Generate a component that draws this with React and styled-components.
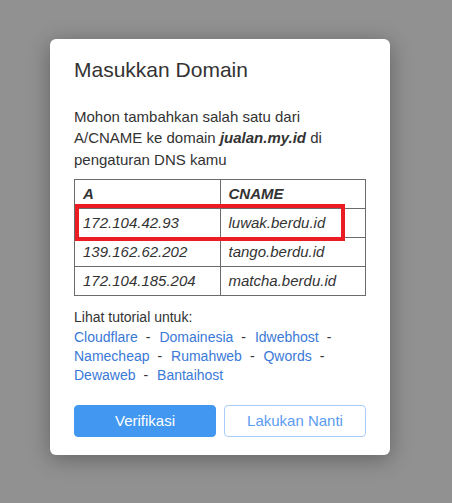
import React from "react";
import styled, { createGlobalStyle } from "styled-components";

const Global = createGlobalStyle`
  html, body { margin: 0; padding: 0; }
  body {
    background: #919191;
    font-family: "Liberation Sans", Arial, sans-serif;
    color: #333;
  }
`;

const Backdrop = styled.div`
  width: 452px;
  height: 503px;
  box-sizing: border-box;
  padding-top: 39px;
  padding-left: 50px;
`;

const Modal = styled.div`
  width: 340px;
  box-sizing: border-box;
  background: #fff;
  border-radius: 6px;
  box-shadow: 0 4px 22px rgba(0, 0, 0, 0.32);
  padding: 19px 24px 18px;
  display: flex;
  flex-direction: column;
`;

const Title = styled.h4`
  margin: 0 0 24px;
  font-size: 21px;
  font-weight: 400;
  line-height: 24px;
  color: #333;
`;

const Intro = styled.p`
  margin: 0 0 9px;
  font-size: 15px;
  line-height: 21.4px;
  color: #333;
`;

const Domain = styled.b`
  font-style: italic;
  font-weight: 700;
`;

const TableWrap = styled.div`
  position: relative;
`;

const Table = styled.table`
  width: 100%;
  border-collapse: collapse;
  font-size: 15px;
  font-style: italic;
  color: #333;
`;

const Cell = styled.td`
  border: 1px solid #6b6b6b;
  padding: 4px 8px;
  line-height: 20px;
  width: 50%;
  font-weight: ${(p) => (p.$head ? 700 : 400)};
`;

const Highlight = styled.div`
  position: absolute;
  left: 1px;
  top: 25px;
  width: 270px;
  height: 37px;
  box-sizing: border-box;
  border: 4px solid #ec1c24;
  pointer-events: none;
`;

const Tutorial = styled.div`
  margin-top: 12px;
  font-size: 14px;
  line-height: 19.4px;
  color: #333;
`;

const Link = styled.a`
  color: #3a79d6;
  text-decoration: none;
`;

const Sep = styled.span`
  margin-left: 8px;
  margin-right: 5px;
  color: #333;
`;

const Actions = styled.div`
  display: flex;
  gap: 8px;
  margin-top: 19px;
`;

const Button = styled.button`
  flex: 1;
  height: 32px;
  border-radius: 4px;
  font-family: "Liberation Sans", Arial, sans-serif;
  font-size: 15px;
  cursor: pointer;
  border: 1px solid ${(p) => (p.$primary ? "#4298f0" : "#a9cdf6")};
  background: ${(p) => (p.$primary ? "#4298f0" : "#fff")};
  color: ${(p) => (p.$primary ? "#fff" : "#5b9cf0")};
`;

const rows = [
  ["172.104.42.93", "luwak.berdu.id"],
  ["139.162.62.202", "tango.berdu.id"],
  ["172.104.185.204", "matcha.berdu.id"],
];

const providers = [
  "Cloudflare",
  "Domainesia",
  "Idwebhost",
  "Namecheap",
  "Rumahweb",
  "Qwords",
  "Dewaweb",
  "Bantaihost",
];

export default function App() {
  return (
    <>
      <Global />
      <Backdrop>
        <Modal>
          <Title>Masukkan Domain</Title>
          <Intro>
            Mohon tambahkan salah satu dari A/CNAME ke domain{" "}
            <Domain>jualan.my.id</Domain> di pengaturan DNS kamu
          </Intro>
          <TableWrap>
            <Table>
              <tbody>
                <tr>
                  <Cell $head>A</Cell>
                  <Cell $head>CNAME</Cell>
                </tr>
                {rows.map(([a, c]) => (
                  <tr key={a}>
                    <Cell>{a}</Cell>
                    <Cell>{c}</Cell>
                  </tr>
                ))}
              </tbody>
            </Table>
            <Highlight />
          </TableWrap>
          <Tutorial>
            Lihat tutorial untuk:
            <br />
            {providers.map((p, i) => (
              <React.Fragment key={p}>
                <Link href="#">{p}</Link>
                {i < providers.length - 1 && (
                  <>
                    <Sep>-</Sep>{" "}
                  </>
                )}
              </React.Fragment>
            ))}
          </Tutorial>
          <Actions>
            <Button $primary>Verifikasi</Button>
            <Button>Lakukan Nanti</Button>
          </Actions>
        </Modal>
      </Backdrop>
    </>
  );
}
